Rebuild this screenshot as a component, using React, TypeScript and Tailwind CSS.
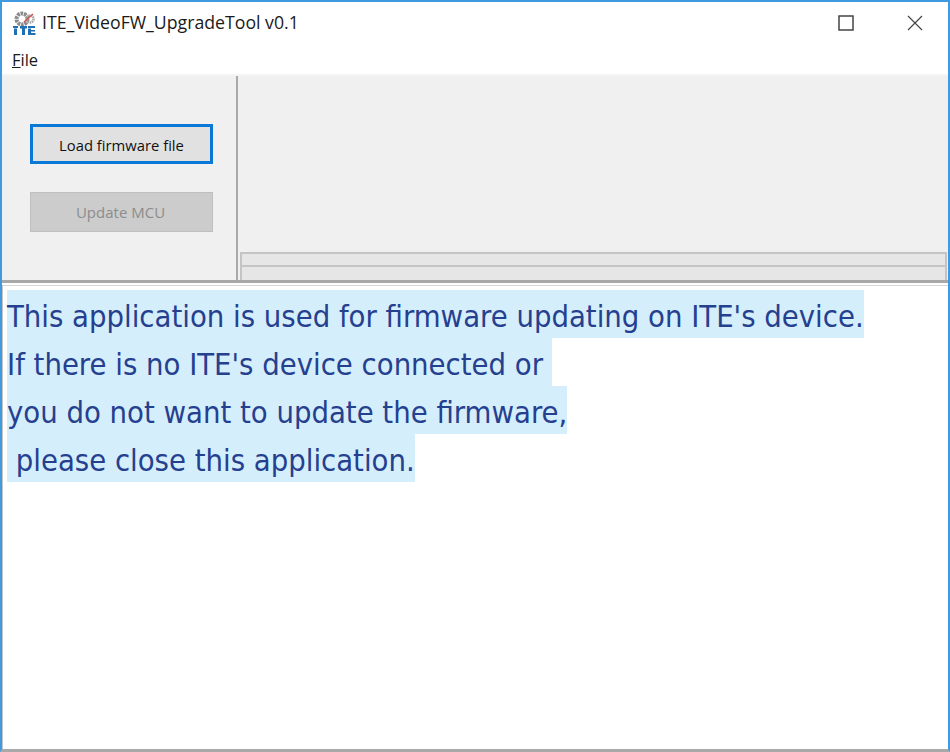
import React from 'react';

const AppIcon = () => (
    <svg width="24" height="24" viewBox="0 0 24 24" className="shrink-0">
        <circle cx="10" cy="8" r="5.5" fill="none" stroke="#8a8a8a" strokeWidth="4" strokeDasharray="2.6 0.8" />
        <circle cx="18" cy="8" r="3.5" fill="none" stroke="#a8a8a8" strokeWidth="2.5" strokeDasharray="1.5 0.6" />
        <path d="M12 11 L21 3" stroke="#d9534f" strokeWidth="1.5" />
        <path d="M1 15h5v2H1zM2 17.5h3V24H2zM8 15h7v2.4H8zM10 17.5h3V24h-3zM16 15h7v2h-7zM16 17.5h3V24h-3zM18 19h5v1.6h-5zM18 22h5.5v2H18z" fill="#1f6fb5" />
    </svg>
);

const WindowButtons = () => (
    <div className="flex items-center h-full text-[#444444]">
        <div className="w-[70px] flex justify-center">
            <svg width="16" height="16" viewBox="0 0 16 16" fill="none" stroke="currentColor" strokeWidth="1.5">
                <rect x="1" y="1" width="14" height="14" />
            </svg>
        </div>
        <div className="w-[67px] flex justify-center">
            <svg width="16" height="16" viewBox="0 0 16 16" fill="none" stroke="currentColor" strokeWidth="1.2">
                <path d="M1 1 L15 15 M15 1 L1 15" />
            </svg>
        </div>
    </div>
);

const LINES = [
    "This application is used for firmware updating on ITE's device.",
    "If there is no ITE's device connected or ",
    'you do not want to update the firmware,',
    ' please close this application.',
];

export default function App() {
    return (
        <div className="w-[950px] h-[752px] flex flex-col bg-white border-l-[2px] border-r-[2px] border-t-2 border-b-[3px] border-x-[#3f9ae0] border-t-[#3f9ae0] border-b-[#a9a9a9] overflow-hidden font-['Open_Sans','Noto_Sans',sans-serif] text-[#1a1a1a]">
            {/* title bar */}
            <div className="h-[42px] shrink-0 flex items-center justify-between pl-[10px]">
                <div className="flex items-center gap-[6px]">
                    <AppIcon />
                    <span className="text-[17.7px] leading-none">ITE_VideoFW_UpgradeTool v0.1</span>
                </div>
                <WindowButtons />
            </div>

            {/* menu */}
            <div className="h-[30px] shrink-0 pl-[10px] pt-[2px] flex items-center text-[16.5px]">
                <span><span className="underline">F</span>ile</span>
            </div>
            <div className="h-[2px] shrink-0 bg-[#f4f4f4]" />

            {/* top panel */}
            <div className="h-[207px] shrink-0 flex bg-[#f0f0f0] border-b-[3px] border-[#a8a8a8]">
                <div className="w-[236px] shrink-0 flex flex-col pl-[28px] pt-[48px] gap-[28px] border-r-[2px] border-[#a9a9a9]">
                    <button className="w-[183px] h-[40px] pt-[2px] bg-[#e1e1e1] border-[3px] border-[#0a78d7] text-[14.8px] text-[#111111]">
                        Load firmware file
                    </button>
                    <button className="w-[183px] h-[40px] pt-[1px] pr-[2px] bg-[#cccccc] border border-[#bfbfbf] text-[15px] text-[#8c8c8c]">
                        Update MCU
                    </button>
                </div>
                <div className="flex-1 flex flex-col justify-end pl-[2px] pr-[1px]">
                    <div className="h-[13px] bg-[#e6e6e6] border-[2px] border-b-0 border-[#c4c4c4]" />
                    <div className="h-[15px] bg-[#e6e6e6] border-[2px] border-[#c4c4c4] border-b-0" />
                </div>
            </div>

            {/* text box */}
            <div className="flex-1 mt-[2px] pl-[4px] pt-[4px] border-l border-[#c4c4c4] border-t border-t-[#d6d6d6]">
                {LINES.map(line => (
                    <div key={line} className="w-fit whitespace-pre h-[48px] leading-[54px] bg-[#d5eefc] text-[#25408f] text-[30.67px] font-['DejaVu_Sans_Condensed','DejaVu_Sans',sans-serif]">
                        {line}
                    </div>
                ))}
            </div>
        </div>
    );
}
